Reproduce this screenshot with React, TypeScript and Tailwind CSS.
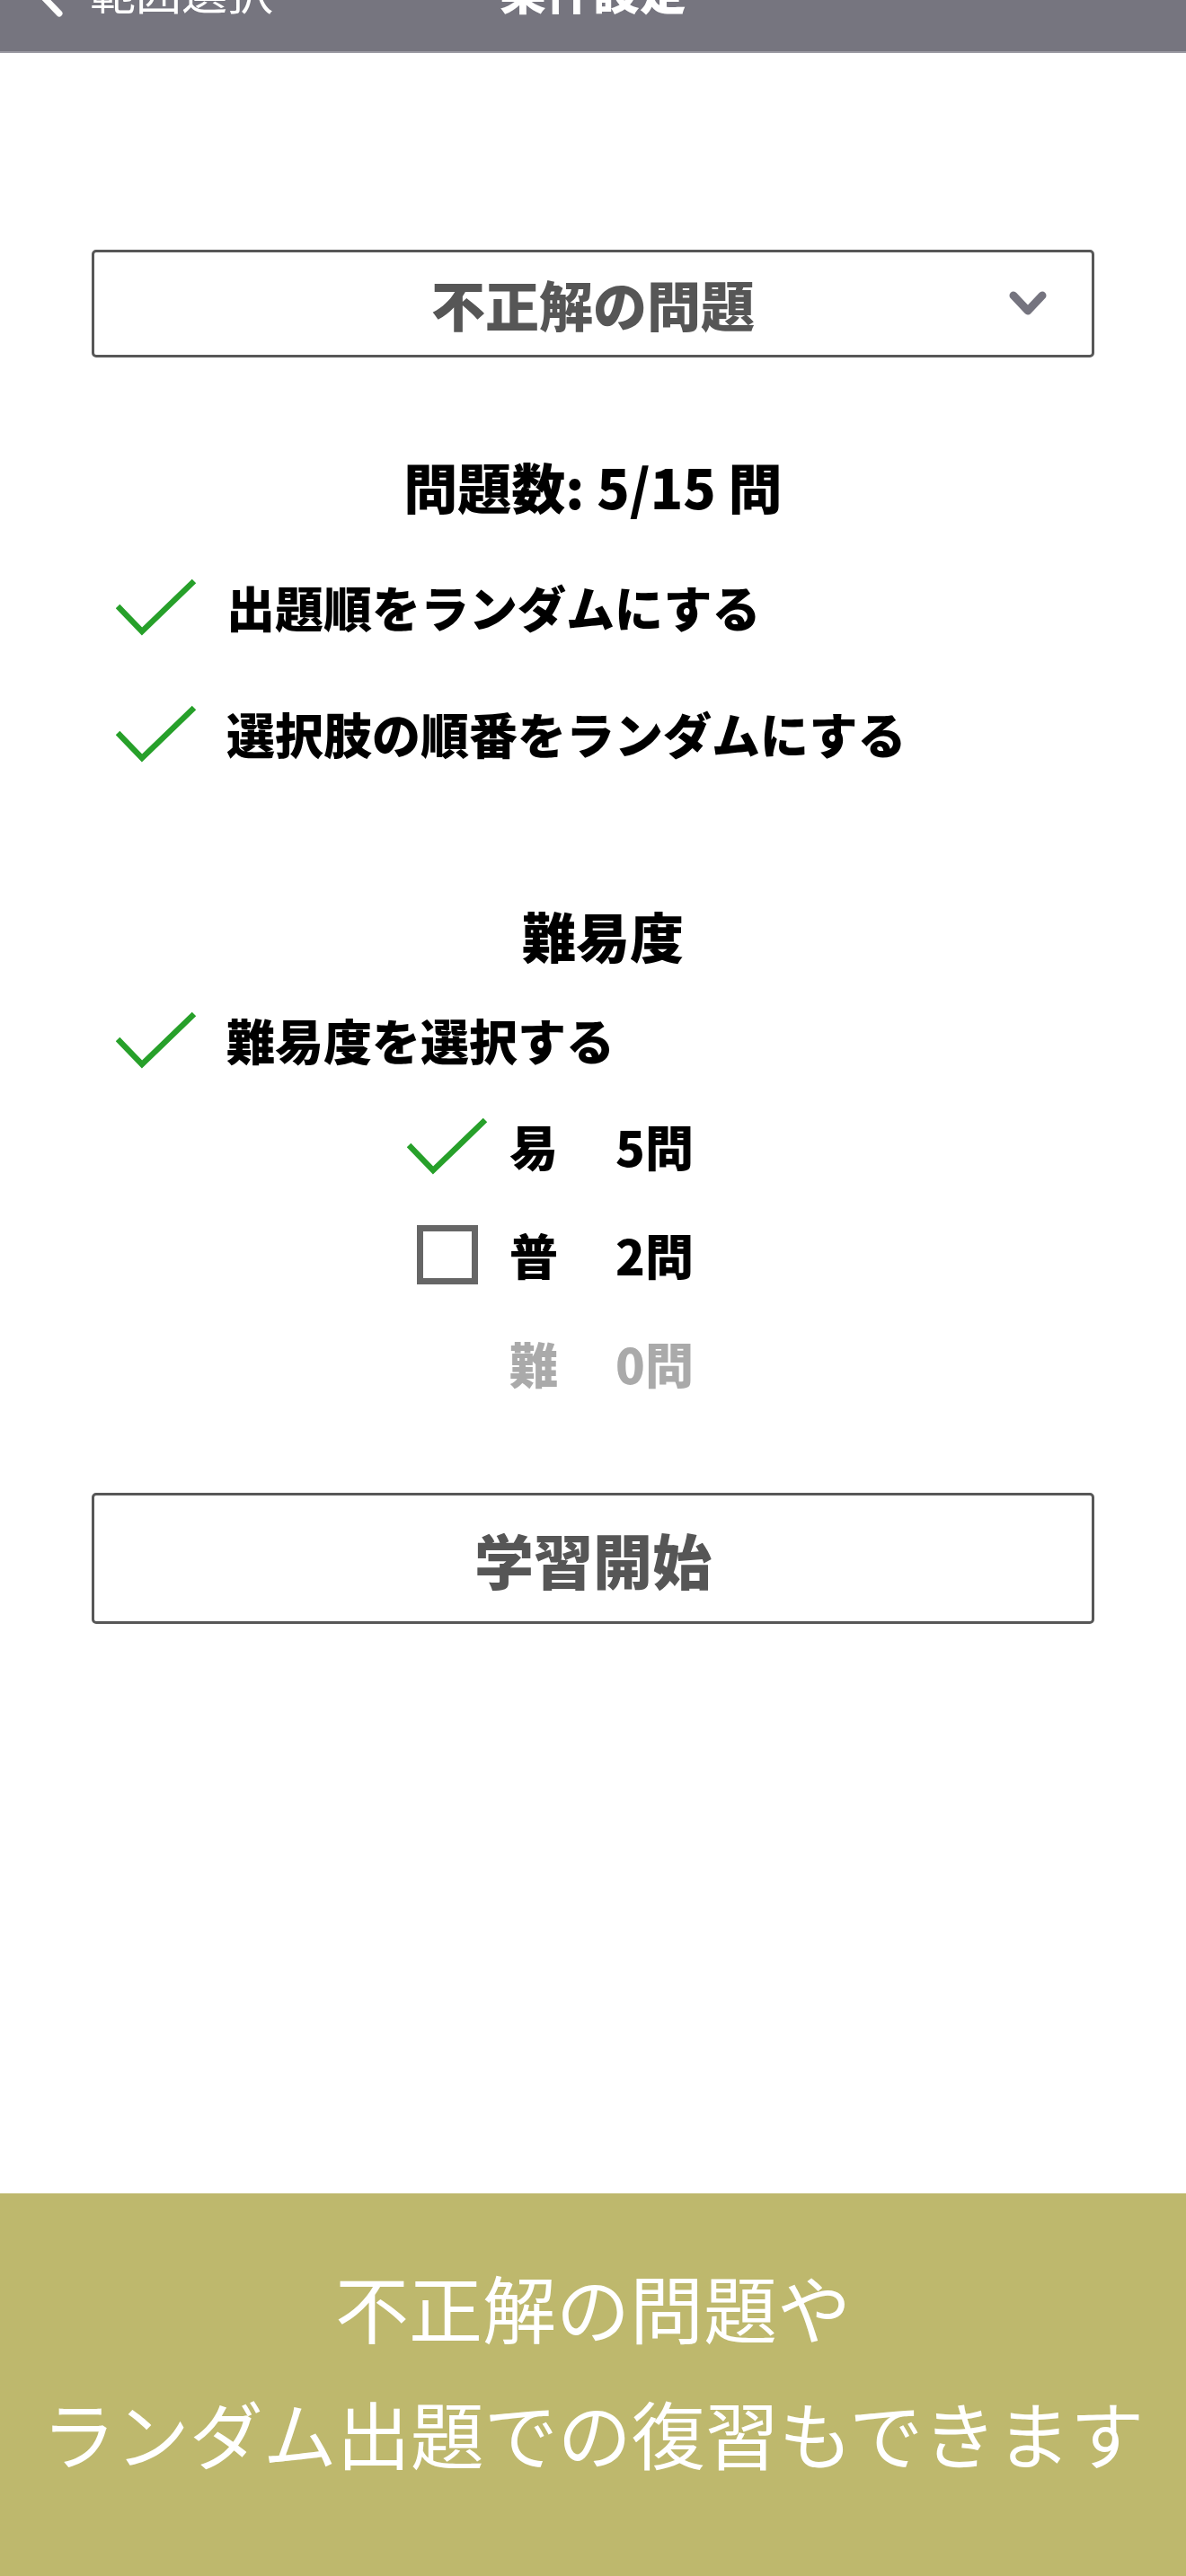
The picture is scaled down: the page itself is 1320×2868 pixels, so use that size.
import React, { useState } from 'react';

type Level = { label: string; count: number; checked: boolean | null };

const CheckMark = () => (
  <svg width="90" height="64" viewBox="0 0 90 64" fill="none">
    <path d="M2 31 L29 59 L87 3" stroke="#27a02a" strokeWidth="6.5" strokeLinejoin="miter" />
  </svg>
);

const EmptyBox = () => (
  <div className="w-[68px] h-[66px] border-[7px] border-[#666666] bg-white" />
);

const OptionRow: React.FC<{ label: string }> = ({ label }) => (
  <div className="flex items-center h-[80px] pl-[27px]">
    <div className="w-[90px] flex justify-center">
      <CheckMark />
    </div>
    <span className="ml-[33px] text-[54px] leading-none font-black text-black">{label}</span>
  </div>
);

export default function App() {
  const [levels] = useState<Level[]>([
    { label: '易', count: 5, checked: true },
    { label: '普', count: 2, checked: false },
    { label: '難', count: 0, checked: null },
  ]);

  return (
    <div className="min-h-[2868px] flex flex-col bg-white font-['Noto_Sans_CJK_JP','Noto_Sans',sans-serif]">
      {/* nav bar */}
      <header className="h-[59px] bg-[#76757f] border-b-[2px] border-[#9a99a2] overflow-hidden">
        <div className="-mt-[41px] grid grid-cols-[1fr_auto_1fr] items-center h-[51px] text-white">
          <div className="flex items-center">
            <svg width="34" height="60" viewBox="0 0 34 60" fill="none" className="ml-[36px]">
              <path d="M30 4 L5 30 L30 56" stroke="white" strokeWidth="7" strokeLinecap="round" strokeLinejoin="round" />
            </svg>
            <span className="ml-[30px] text-[51px] leading-none">範囲選択</span>
          </div>
          <span className="text-[52px] leading-none font-black">条件設定</span>
          <div />
        </div>
      </header>

      <main className="px-[102px] flex flex-col">
        {/* category select */}
        <button className="mt-[219px] h-[120px] grid grid-cols-[1fr_auto_1fr] items-center border-[3px] border-[#575757] rounded-[5px] bg-white">
          <div />
          <span className="text-[60px] leading-none font-black text-[#565656]">不正解の問題</span>
          <div className="flex justify-end pr-[50px]">
            <svg width="42" height="28" viewBox="0 0 42 28" fill="none">
              <path d="M5 5 L21 22 L37 5" stroke="#75747f" strokeWidth="9" strokeLinecap="round" strokeLinejoin="round" />
            </svg>
          </div>
        </button>

        <div className="mt-[103px] h-[80px] flex items-center justify-center text-[60px] leading-none font-black text-black">
          問題数: 5/15 問
        </div>

        <div className="mt-[55px] flex flex-col gap-[61px]">
          <OptionRow label="出題順をランダムにする" />
          <OptionRow label="選択肢の順番をランダムにする" />
        </div>

        <div className="mt-[144px] h-[80px] flex items-center justify-center pl-[22px] text-[60px] leading-none font-black text-black">
          難易度
        </div>

        <div className="mt-[37px]">
          <OptionRow label="難易度を選択する" />
        </div>

        <div className="mt-[38px] flex flex-col gap-[41px] pl-[351px]">
          {levels.map((lv) => (
            <div key={lv.label} className="flex items-center h-[80px]">
              <div className="w-[90px] flex justify-center">
                {lv.checked === true && <CheckMark />}
                {lv.checked === false && <EmptyBox />}
              </div>
              <span
                className={`ml-[24px] w-[118px] text-[54px] leading-none font-black ${
                  lv.checked === null ? 'text-[#aaaaaa]' : 'text-black'
                }`}
              >
                {lv.label}
              </span>
              <span
                className={`text-[54px] leading-none font-black ${
                  lv.checked === null ? 'text-[#aaaaaa]' : 'text-black'
                }`}
              >
                {lv.count}問
              </span>
            </div>
          ))}
        </div>

        <button className="mt-[104px] h-[146px] flex items-center justify-center border-[3px] border-[#575757] rounded-[5px] bg-white">
          <span className="text-[66px] leading-none font-black text-[#565656]">学習開始</span>
        </button>
      </main>

      {/* caption band */}
      <footer className="mt-auto h-[426px] bg-[#beb86d] flex flex-col items-center pt-[56px] text-white text-[82px] leading-[140px]">
        <p>不正解の問題や</p>
        <p>ランダム出題での復習もできます</p>
      </footer>
    </div>
  );
}
